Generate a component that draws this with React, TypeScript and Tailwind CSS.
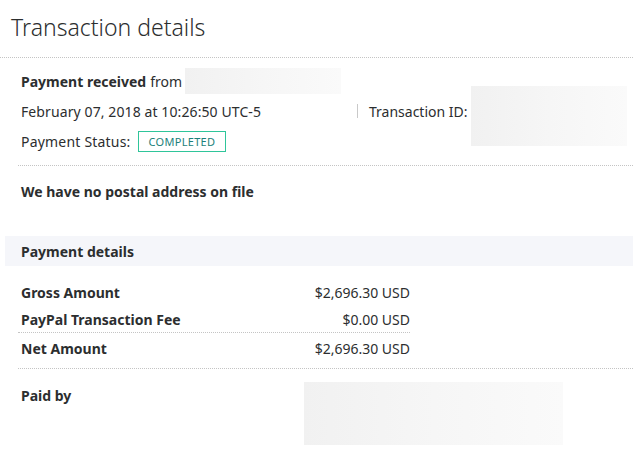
const Blur = ({ className }: { className: string }) => (
  <div
    className={`bg-gradient-to-r from-[#f1f1f1] via-[#f6f6f6] to-[#fafafa] ${className}`}
  />
);

const AMOUNTS = [
  { label: "Gross Amount", value: "$2,696.30 USD", h: "h-[27px]", line: false },
  { label: "PayPal Transaction Fee", value: "$0.00 USD", h: "h-[27px]", line: true },
  { label: "Net Amount", value: "$2,696.30 USD", h: "h-[30px]", line: false },
];

export default function App() {
  return (
    <div className="h-[461px] w-[633px] overflow-hidden bg-white font-['Noto_Sans',sans-serif] text-[14px] text-[#2c2e2f]">
      {/* title */}
      <header className="flex h-[58px] items-start border-b border-dotted border-[#c4c4c4] pl-[11px] pt-[9px]">
        <h1 className="text-[23px] font-light leading-[36px] text-[#2c2e2f]">
          Transaction details
        </h1>
      </header>

      {/* summary */}
      <section className="ml-[18px] flex border-b border-dotted border-[#c4c4c4] pb-[9px] pt-[8px]">
        <div className="w-[339px] pl-[3px]">
          <div className="flex h-[30px] items-center">
            <span className="font-bold">Payment received</span>
            <span className="ml-[4px]">from</span>
            <Blur className="ml-[3px] h-[26px] w-[156px]" />
          </div>
          <div className="flex h-[30px] items-center tracking-[0.1px]">
            February 07, 2018 at 10:26:50 UTC-5
          </div>
          <div className="flex h-[30px] items-center">
            <span className="tracking-[0.2px]">Payment Status:</span>
            <span className="ml-[7px] border border-[#2fc59a] px-[10px] text-[11px] leading-[19px] tracking-[0.3px] text-[#1c7f7a]">
              COMPLETED
            </span>
          </div>
        </div>
        <div className="flex items-start pt-[20px]">
          <div className="mt-[10px] flex h-[30px] items-center">
            <span className="mr-[11px] h-[14px] w-px bg-[#c9c9c9]" />
            <span>Transaction ID:</span>
          </div>
          <Blur className="ml-[3px] h-[60px] w-[156px]" />
        </div>
      </section>

      {/* address */}
      <section className="ml-[18px] pb-[30px] pl-[3px] pt-[10px]">
        <div className="flex h-[30px] items-center font-bold">
          We have no postal address on file
        </div>
      </section>

      {/* payment details */}
      <div className="ml-[5px] flex h-[30px] items-center bg-[#f5f6fa] pl-[16px] font-bold">
        Payment details
      </div>

      <section className="ml-[18px] border-b border-dotted border-[#c4c4c4] pb-[5px] pt-[13px]">
        {AMOUNTS.map((row) => (
          <div
            key={row.label}
            className={`flex ${row.h} w-[392px] items-center justify-between pl-[3px] ${
              row.line ? "border-b border-dotted border-[#c4c4c4]" : ""
            }`}
          >
            <span className="font-bold">{row.label}</span>
            <span>{row.value}</span>
          </div>
        ))}
      </section>

      {/* paid by */}
      <section className="ml-[18px] flex pl-[3px] pt-[13px]">
        <div className="flex h-[26px] w-[283px] items-center font-bold">Paid by</div>
        <Blur className="h-[63px] w-[259px]" />
      </section>
    </div>
  );
}
